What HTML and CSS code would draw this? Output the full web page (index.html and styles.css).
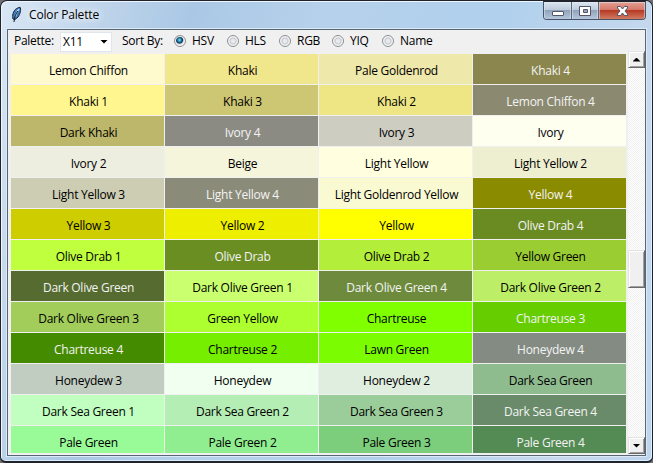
FILE: index.html
```html
<!DOCTYPE html>
<html lang="en">
<head>
<meta charset="utf-8">
<title>Color Palette</title>
<link rel="stylesheet" href="styles.css">
</head>
<body>
<div class="window">
  <header class="titlebar">
    <svg class="feather" width="12" height="18" viewBox="0 0 12 18"><path d="M2 13C1 10 2 5 5.500 2.500L9 1.200C10.500 3 9 8.500 7 11L4 13.500Z" fill="#3f7fc0" stroke="#18243a"/><path d="M8 3C6 5 5 8 4.500 11" fill="none" stroke="#b8dcf5" stroke-width="1.3"/><path d="M7 5C5 7 3.500 11 3 16" fill="none" stroke="#10151f" stroke-width="1"/></svg>
    <h1 class="title">Color Palette</h1>
    <div class="controls">
      <span class="control minimize"><svg width="28" height="18"><rect x="8.5" y="9.5" width="11" height="4" rx=".5" fill="#fff" stroke="#535666"/></svg></span>
      <span class="control maximize"><svg width="26" height="18"><path fill-rule="evenodd" d="M7.500 4.500h11v9h-11zM11.500 7.500v3h4v-3z" fill="#fff" stroke="#535666"/></svg></span>
      <span class="control close"><svg width="46" height="18"><path d="M18.500 4.500h3l2 2.500 2-2.500h3v1.500l-2.500 3 2.500 3v1.500h-3l-2-2.500-2 2.500h-3v-1.500l2.500-3-2.500-3z" fill="#fff" stroke="#535666"/></svg></span>
    </div>
  </header>
  <main class="client">
    <div class="toolbar">
      <span class="palette-label">Palette:</span>
      <span class="combo">X11<i class="arrow down"></i></span>
      <span class="sort-label">Sort By:</span>
      <span class="option hsv"><i class="radio checked"></i>HSV</span>
      <span class="option hls"><i class="radio"></i>HLS</span>
      <span class="option rgb"><i class="radio"></i>RGB</span>
      <span class="option yiq"><i class="radio"></i>YIQ</span>
      <span class="option"><i class="radio"></i>Name</span>
    </div>
    <div class="content">
      <div class="swatches" id="swatches"></div>
      <div class="scrollbar">
        <span class="button"><i class="arrow up"></i></span>
        <span class="button thumb"></span>
        <span class="button"><i class="arrow down"></i></span>
      </div>
    </div>
  </main>
</div>
<script src="palette.js"></script>
</body>
</html>
```
FILE: palette.js
```js
const colors = [
  ["Lemon Chiffon", "#fffacd"], ["Khaki", "#f0e68c"], ["Pale Goldenrod", "#eee8aa"], ["Khaki 4", "#8b864e", 1],
  ["Khaki 1", "#fff68f"], ["Khaki 3", "#cdc673"], ["Khaki 2", "#eee685"], ["Lemon Chiffon 4", "#8b8970", 1],
  ["Dark Khaki", "#bdb76b"], ["Ivory 4", "#8b8b83", 1], ["Ivory 3", "#cdcdc1"], ["Ivory", "#fffff0"],
  ["Ivory 2", "#eeeee0"], ["Beige", "#f5f5dc"], ["Light Yellow", "#ffffe0"], ["Light Yellow 2", "#eeeed1"],
  ["Light Yellow 3", "#cdcdb4"], ["Light Yellow 4", "#8b8b7a", 1], ["Light Goldenrod Yellow", "#fafad2"], ["Yellow 4", "#8b8b00", 1],
  ["Yellow 3", "#cdcd00"], ["Yellow 2", "#eeee00"], ["Yellow", "#ffff00"], ["Olive Drab 4", "#698b22", 1],
  ["Olive Drab 1", "#c0ff3e"], ["Olive Drab", "#6b8e23", 1], ["Olive Drab 2", "#b3ee3a"], ["Yellow Green", "#9acd32"],
  ["Dark Olive Green", "#556b2f", 1], ["Dark Olive Green 1", "#caff70"], ["Dark Olive Green 4", "#6e8b3d", 1], ["Dark Olive Green 2", "#bcee68"],
  ["Dark Olive Green 3", "#a2cd5a"], ["Green Yellow", "#adff2f"], ["Chartreuse", "#7fff00"], ["Chartreuse 3", "#66cd00", 1],
  ["Chartreuse 4", "#458b00", 1], ["Chartreuse 2", "#76ee00"], ["Lawn Green", "#7cfc00"], ["Honeydew 4", "#838b83", 1],
  ["Honeydew 3", "#c1cdc1"], ["Honeydew", "#f0fff0"], ["Honeydew 2", "#e0eee0"], ["Dark Sea Green", "#8fbc8f"],
  ["Dark Sea Green 1", "#c1ffc1"], ["Dark Sea Green 2", "#b4eeb4"], ["Dark Sea Green 3", "#9bcd9b"], ["Dark Sea Green 4", "#698b69", 1],
  ["Pale Green", "#98fb98"], ["Pale Green 2", "#90ee90"], ["Pale Green 3", "#7ccd7c"], ["Pale Green 4", "#548b54", 1]
];
const grid = document.getElementById("swatches");
for (const [name, color, light] of colors) {
  const cell = document.createElement("div");
  cell.className = light ? "swatch light" : "swatch";
  cell.style.backgroundColor = color;
  cell.textContent = name;
  grid.append(cell);
}
```
FILE: styles.css
```css
* { box-sizing: border-box; }
body {
  margin: 0;
  width: 653px;
  height: 463px;
  overflow: hidden;
  background: #6e7076;
  font: 12px/16px "Open Sans", "Noto Sans", sans-serif;
  letter-spacing: -0.27px;
  color: #000;
}
.window {
  width: 653px;
  height: 463px;
  padding: 0 6px 6px 5px;
  border: 1px solid #20232b;
  border-width: 1px 1px 2px 1px;
  border-radius: 7px 7px 6px 6px;
  background: linear-gradient(105deg, #d9e7f5 0, #bdd3ea 14%, #aac8e5 25%, #b6d1eb 42%, #b0d0ed 65%, #c8d9ed 88%, #bdd4ec 100%);
  box-shadow: inset 1px 1px 0 #edf6ff, inset -1px -1px 0 #d9efff;
}
.titlebar { display: flex; height: 28px; padding-left: 5px; }
.feather { margin-top: 5px; }
.title {
  margin: 6px 0 0 6px;
  font-size: 12px;
  line-height: 16px;
  font-weight: 400;
  letter-spacing: -0.15px;
  text-shadow: 0 0 7px #fff, 0 0 10px #fff;
}
.controls {
  display: flex;
  width: 103px;
  height: 19px;
  margin-left: auto;
  border: 1px solid #485365;
  border-top-color: #20232b;
  border-radius: 0 0 4px 4px;
  overflow: hidden;
}
.control {
  height: 18px;
  border-right: 1px solid #59687c;
  background: linear-gradient(#dce6f0, #bccadb 44%, #91a3ba 46%, #b8cbe0);
  box-shadow: inset 0 0 0 1px #e1ebf680;
}
.control svg { display: block; }
.minimize { width: 28px; }
.maximize { width: 27px; }
.close { width: 46px; border: 0; background: linear-gradient(#e5a194, #d47769 44%, #b63822 46%, #d5836c); }
.client {
  height: 427px;
  margin-left: 1px;
  padding-left: 3px;
  border: 1px solid #576673;
  background: #f0f0f0;
  box-shadow: 0 0 0 1px #dceaf8;
}
.toolbar { display: flex; align-items: center; height: 22px; padding-left: 3px; }
.palette-label { width: 46px; }
.combo {
  display: flex;
  align-items: center;
  justify-content: space-between;
  width: 52px;
  height: 20px;
  margin-top: 1px;
  padding: 0 3px 0 2px;
  border: 1px solid #e1e6ee;
  background: #fff;
}
.sort-label { width: 52px; margin-left: 10px; }
.option { display: flex; align-items: center; gap: 6px; }
.radio {
  width: 12px;
  height: 12px;
  border: 1px solid #8b8e91;
  border-radius: 50%;
  background: radial-gradient(circle, #e8eaed 0 25%, #c7cbd2 40%, #f5f5f5 65%);
  box-shadow: inset 0 0 0 1px #f6f6f6;
}
.checked { background: radial-gradient(circle at 45% 40%, #8be0fa 0, #2790bd 20%, #103852 38%, #dde1e4 52%, #f4f4f4 65%); }
.hsv, .rgb { width: 53px; }
.hls { width: 52px; }
.yiq { width: 50px; }
.content { display: flex; justify-content: space-between; height: 403px; margin-top: -1px; }
.swatches {
  display: grid;
  grid-template-columns: repeat(4, 153px);
  grid-auto-rows: 30px;
  gap: 1px;
  height: 399px;
  margin-top: 3px;
  overflow: hidden;
}
.swatch { padding: 9px 0 0 2px; text-align: center; }
.light { color: #f3f3f3; }
.scrollbar {
  display: flex;
  flex-direction: column;
  width: 17px;
  background: repeating-conic-gradient(#f0f0f0 0 25%, #fff 0 50%) 0 0 / 2px 2px;
}
.button {
  display: flex;
  align-items: center;
  justify-content: center;
  height: 17px;
  border: 1px solid;
  border-color: #e3e3e3 #696969 #696969 #e3e3e3;
  background: #f0f0f0;
  box-shadow: inset 1px 1px #fff, inset -1px -1px #a0a0a0;
}
.thumb { height: 38px; margin: 182px 0 149px; }
.arrow { width: 8px; height: 4px; background: #000; }
.down { clip-path: polygon(0 0, 100% 0, 50% 100%); }
.up { clip-path: polygon(0 100%, 100% 100%, 50% 0); }
```
